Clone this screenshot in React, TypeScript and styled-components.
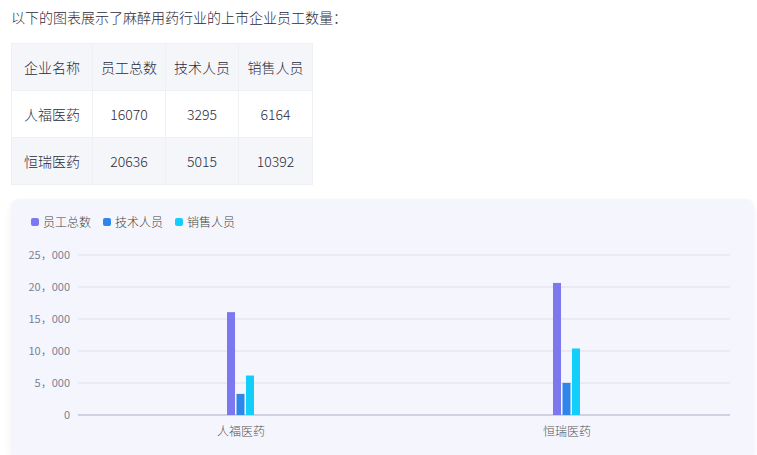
import React from "react";
import styled, { createGlobalStyle } from "styled-components";

const Global = createGlobalStyle`
  body { margin: 0; background: #fff; font-family: "Noto Sans CJK SC", "Noto Sans", sans-serif; color: #2b2b3b; overflow: hidden; }
`;
const Page = styled.div`padding: 5px 11px 0 11px; width: 757px; box-sizing: border-box;`;
const Intro = styled.p`margin: 0 0 14px 0; font-size: 14px; line-height: 24px; font-weight: 300;`;
const Table = styled.table`border-collapse: collapse; font-size: 14px; font-weight: 300; margin-bottom: 14px;`;
const Td = styled.td<{ $alt?: boolean; $w: number }>`
  width: ${p => p.$w}px; box-sizing: border-box; height: 47px; padding: 0; text-align: center;
  border: 1px solid #eff0f4; background: ${p => (p.$alt ? "#f5f6fa" : "#fff")};
`;
const Card = styled.div`
  background: #f5f6fd; border-radius: 8px; height: 260px; padding: 14px 0 0 0; box-sizing: border-box;
  width: 743px; box-shadow: 0 4px 8px rgba(0,0,0,0.06);
`;
const Legend = styled.div`display: flex; gap: 12px; padding-left: 20px; font-size: 12px; font-weight: 300; color: #444;`;
const LegendItem = styled.div`display: flex; align-items: center; gap: 4px;`;
const Dot = styled.span<{ $c: string }>`width: 8px; height: 8px; border-radius: 2px; background: ${p => p.$c};`;

const cols = [81, 73, 73, 74];
const rows = [
  ["企业名称", "员工总数", "技术人员", "销售人员"],
  ["人福医药", "16070", "3295", "6164"],
  ["恒瑞医药", "20636", "5015", "10392"],
];
const colors = ["#7b78f0", "#2f86ea", "#13cdfa"];
const data = [[16070, 3295, 6164], [20636, 5015, 10392]];
const names = ["人福医药", "恒瑞医药"];

function Chart() {
  const x0 = 67, x1 = 719, top = 25, y0 = 185;
  const h = y0 - top;
  const ticks = [0, 5000, 10000, 15000, 20000, 25000];
  const gw = (x1 - x0) / 2;
  return (
    <svg width={743} height={210} style={{ display: "block" }}>
      {ticks.map((t, i) => {
        const y = y0 - (t / 25000) * h;
        return (
          <g key={i}>
            <line x1={x0} x2={x1} y1={y} y2={y} stroke={t === 0 ? "#a9adc2" : "#dcdfea"} strokeWidth={1} />
            <text x={x0 - 8} y={y + 4} textAnchor="end" fontSize={11} fill="#7c7f92" fontFamily="Noto Sans CJK SC, sans-serif">
              {t.toLocaleString("en-US").replace(",", "，")}
            </text>
          </g>
        );
      })}
      {data.map((g, gi) => {
        const cx = x0 + gw * (gi + 0.5);
        return (
          <g key={gi}>
            {g.map((v, i) => {
              const bh = (v / 25000) * h;
              return <rect key={i} x={cx - 14 + i * 9.5} y={y0 - bh} width={8} height={bh} fill={colors[i]} />;
            })}
            <text x={cx} y={y0 + 21} textAnchor="middle" fontSize={12} fill="#555" fontWeight={300}>{names[gi]}</text>
          </g>
        );
      })}
    </svg>
  );
}

export default function App() {
  return (
    <Page>
      <Global />
      <Intro>以下的图表展示了麻醉用药行业的上市企业员工数量：</Intro>
      <Table>
        <tbody>
          {rows.map((r, ri) => (
            <tr key={ri}>
              {r.map((c, ci) => <Td key={ci} $w={cols[ci]} $alt={ri !== 1}>{c}</Td>)}
            </tr>
          ))}
        </tbody>
      </Table>
      <Card>
        <Legend>
          {["员工总数", "技术人员", "销售人员"].map((n, i) => (
            <LegendItem key={n}><Dot $c={colors[i]} />{n}</LegendItem>
          ))}
        </Legend>
        <Chart />
      </Card>
    </Page>
  );
}
